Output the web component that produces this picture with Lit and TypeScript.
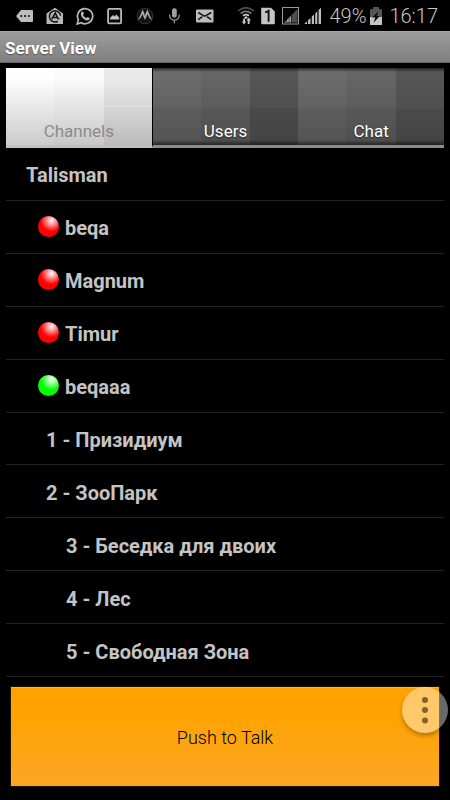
import { LitElement, html, css, svg } from "lit";
import { customElement, state } from "lit/decorators.js";
import { classMap } from "lit/directives/class-map.js";

type Row = { label: string; kind: "root" | "user" | "channel" | "sub"; talking?: boolean };

const rows: Row[] = [
  { label: "Talisman", kind: "root" },
  { label: "beqa", kind: "user" },
  { label: "Magnum", kind: "user" },
  { label: "Timur", kind: "user" },
  { label: "beqaaa", kind: "user", talking: true },
  { label: "1 - Призидиум", kind: "channel" },
  { label: "2 - ЗооПарк", kind: "channel" },
  { label: "3 - Беседка для двоих", kind: "sub" },
  { label: "4 - Лес", kind: "sub" },
  { label: "5 - Свободная Зона", kind: "sub" },
];

const icon = (content: unknown) =>
  html`<svg class="icon" viewBox="0 0 18 18" aria-hidden="true">${content}</svg>`;

const notifications = [
  svg`<path fill="#bdbdbd" d="M5 3H16Q17 3 17 4V14Q17 15 16 15H5L0.5 9.8V8.6Z"/>
    <g fill="#111"><circle cx="5.2" cy="9" r="1.1"/><circle cx="9" cy="9" r="1.1"/><circle cx="12.8" cy="9" r="1.1"/></g>`,
  svg`<path fill="#b8b8b8" d="M0.5 6.5L9 0.8L17 6.5V17H0.5Z"/>
    <circle cx="9" cy="9.4" r="5.6" fill="none" stroke="#151515" stroke-width="1.5" stroke-dasharray="28 7.2" transform="rotate(60 9 9.4)"/>
    <path fill="none" stroke="#151515" stroke-width="1.5" d="M5.8 12L9.3 6L11.4 10.6Q12 12 13.4 11.8M7 10.4H11"/>`,
  svg`<path fill="none" stroke="#b8b8b8" stroke-width="1.7" d="M1.2 17L2.4 12.8A7.6 7.6 0 1 1 5.2 15.7Z"/>
    <path fill="#b8b8b8" d="M5.6 4.8Q6.8 3.9 7.3 5L8 6.8L7 8.1Q8 10.3 10.3 11.1L11.5 9.9L13.7 11Q13.9 13.3 11.3 13.5Q8.7 13.4 6.4 10.7Q3.7 7.6 5.6 4.8Z"/>`,
  svg`<rect x="2.1" y="1.9" width="13" height="14.4" rx="1" fill="#060606" stroke="#b8b8b8" stroke-width="1.8"/>
    <path fill="#c4c4c4" d="M4.2 12.5V10.8L7 8L8.6 9.6L10.4 7.5L13.2 10.7V12.5Z"/>`,
  svg`<circle cx="9" cy="9" r="7.8" fill="#111" stroke="#333" stroke-width="1"/>
    <path fill="#a8a8a8" d="M1.8 13.4Q4.6 8 6.5 2.5Q8.2 5.3 9 9Q9.8 5.3 11.5 2.5Q13.4 8 16.2 13.4Q13 11.5 11.4 7.2Q10.4 10.3 9 13Q7.6 10.3 6.6 7.2Q5 11.5 1.8 13.4Z"/>`,
  svg`<rect x="6" y="1.2" width="4.8" height="9.5" rx="2.4" fill="#a0a0a0"/>
    <path fill="none" stroke="#8c8c8c" stroke-width="1.3" d="M3.6 7.5V8.4A4.8 4.8 0 0 0 13.2 8.4V7.5M8.4 13.2V16.5"/>`,
  svg`<rect x="0" y="2.5" width="17.5" height="13" rx="1" fill="#bdbdbd"/>
    <path fill="none" stroke="#151515" stroke-width="1.5" d="M2.2 5.5L6.6 8.2Q8.7 9.8 10.8 8.2L15.2 5.5M2.2 12.7L6.4 9.6M15.2 12.7L11 9.6"/>`,
];

const radios = [
  svg`<g fill="none" stroke-width="1.7"><path stroke="#4c4c4c" d="M1.2 3.8Q9 -2.2 16.8 3.8"/><path stroke="#777" d="M3.6 6.5Q9 2.3 14.4 6.5"/><path stroke="#c8c8c8" d="M6 8.7Q9 6.6 12 8.7"/></g>
    <path fill="#c8c8c8" d="M9 9L11 10.8L9 12L7 10.8ZM6.2 11.5H8V14.5H9.2L7.1 17.5L4.8 14.5H6.2ZM10.7 17V13.5H9.5L11.7 10.5L14 13.5H12.6V17Z"/>`,
  svg`<path fill="#c4c4c4" d="M2.2 0.8H12L15.8 4.6V16Q15.8 17.2 14.6 17.2H3.4Q2.2 17.2 2.2 16Z"/>
    <path fill="none" stroke="#111" stroke-width="1.9" d="M6.2 5.5L9.6 3.8V14.8"/>`,
  svg`<rect x="1.5" y="0.5" width="16" height="16.5" fill="#050505" stroke="#999" stroke-width="1"/>
    <path fill="#505050" d="M10.5 15.5V8.3L16.5 2V15.5Z"/>
    <path fill="#c4c4c4" d="M3.3 15.5L5.5 13.5V15.5ZM6.2 15.5V12.4L7.7 11V15.5ZM8.4 15.5V10.2L9.8 9V15.5Z"/>`,
  svg`<path fill="#bdbdbd" d="M1.2 17L4 14.3V17ZM5 17V13.3L7.5 11V17ZM8.8 17V9.6L11 7.6V17ZM12.2 17V6.4L14.3 4.4V17ZM15.6 17V3L18 0.8V17Z"/>`,
];

@customElement("app-root")
export class AppRoot extends LitElement {
  @state() private selected = "Channels";

  static styles = css`
    :host {
      display: flex;
      flex-direction: column;
      min-height: 100vh;
      background: #000;
      font-family: Roboto, "Noto Sans", sans-serif;
    }
    button {
      border: 0;
      padding: 0;
      margin: 0;
      font: inherit;
      cursor: pointer;
    }
    .status {
      display: flex;
      justify-content: space-between;
      align-items: center;
      height: 31px;
      padding: 0 12px 0 16px;
      color: #c8c8c8;
    }
    .notes,
    .system,
    .radios {
      display: flex;
      align-items: center;
    }
    .notes {
      gap: 12px;
    }
    .radios {
      gap: 4px;
    }
    .system {
      font-size: 20px;
      line-height: 31px;
      font-weight: 350;
    }
    .icon {
      display: block;
      width: 18px;
      height: 18px;
    }
    .percent {
      margin-left: 8px;
      padding-top: 2px;
    }
    .clock {
      margin-left: 7px;
      padding-top: 2px;
    }
    .battery {
      display: block;
      width: 12px;
      height: 18px;
      margin-left: 4px;
    }
    .title {
      margin: 0;
      box-sizing: border-box;
      height: 32px;
      padding: 1px 5px 0;
      border-top: 1px solid #aaa;
      border-bottom: 1px solid #6a6a6a;
      background: linear-gradient(#9c9c9c, #7f7f7f);
      color: #fff;
      font-size: 17px;
      line-height: 30px;
      font-weight: 700;
      text-shadow: 0 1px 1px #555;
    }
    .tabs {
      display: flex;
      height: 80px;
      margin: 5px 6px 0;
    }
    .tab {
      flex: 1;
      display: flex;
      align-items: flex-end;
      justify-content: center;
      box-sizing: border-box;
      padding-bottom: 3px;
      border-bottom: 3px solid #8c8c8c;
      color: #fff;
      font-size: 17px;
      line-height: 22px;
      text-shadow: 0 1px 2px #0008;
      background:
        linear-gradient(90deg, #0000 67%, #ffffff0c 67%) 0 39px / 100% 1px no-repeat,
        linear-gradient(#0000 39px, #0000000c 39px),
        linear-gradient(#0009, #0000 4px, #0000 72px, #0008),
        linear-gradient(90deg, #0000 33%, #0000000f 33% 67%, #0003 67%),
        linear-gradient(#6e6e6e, #575757);
    }
    .tab.on {
      color: #8a8a8a;
      text-shadow: none;
      border-right: 1px solid #000;
      border-bottom-color: #c0c0c0;
      background:
        linear-gradient(90deg, #0000 67%, #fff4 67%) 0 38px / 100% 1px no-repeat,
        linear-gradient(90deg, #0000 33%, #00000004 33% 67%, #00000014 67%),
        linear-gradient(#fff, #fdfdfd 12px, #cbcbcb);
    }
    .list {
      flex: 1;
      display: flex;
      flex-direction: column;
      list-style: none;
      margin: 0 6px;
      padding: 0;
    }
    .row {
      flex: 1;
      display: flex;
      align-items: center;
      min-height: 40px;
      box-sizing: border-box;
      border-bottom: 1px solid #222;
      color: #c4c4c4;
      font-size: 20px;
      line-height: 24px;
      font-weight: 700;
    }
    .label {
      padding-top: 3px;
    }
    .root {
      padding-left: 20px;
    }
    .user {
      padding-left: 32px;
      gap: 6px;
    }
    .channel {
      padding-left: 40px;
    }
    .sub {
      padding-left: 60px;
    }
    .ball {
      width: 21px;
      height: 21px;
      border-radius: 50%;
      background: radial-gradient(circle at 64% 22%, #fff, #ff8c8c 22%, #f00 50%, #f00 80%, #c00);
    }
    .ball.talking {
      background: radial-gradient(circle at 64% 22%, #fff, #8cff8c 22%, #0f0 50%, #0f0 80%, #0c0);
    }
    .footer {
      position: relative;
      padding: 10px 11px 14px;
    }
    .talk {
      display: block;
      width: 100%;
      height: 99px;
      padding-top: 2px;
      background: linear-gradient(#ffa200, #ffa303 30%, #fca626);
      box-shadow: inset 0 1px #ffb636, 0 0 1px #b87400;
      color: #000;
      font-size: 18px;
      line-height: 22px;
      font-weight: 350;
    }
    .more {
      position: absolute;
      top: 10px;
      right: 2px;
      width: 46px;
      height: 46px;
      border-radius: 50%;
      background: #ffffff69;
      box-shadow: 0 3px 4px #0004;
    }
    .dots {
      display: block;
      width: 46px;
      height: 46px;
    }
  `;

  render() {
    return html`
      <header class="status">
        <div class="notes">${notifications.map(icon)}</div>
        <div class="system">
          <div class="radios">${radios.map(icon)}</div>
          <span class="percent">49%</span>
          <svg class="battery" viewBox="0 0 12 18" aria-hidden="true">
            <path fill="#555" d="M0 2.2H3V0H9V2.2H12V10H0Z" />
            <path fill="#c4c4c4" d="M0 10H12V18H0Z" />
            <path fill="#0b0b0b" d="M8.2 4.2L2.2 10.6H5.3L3.6 15.8L9.8 9H6.7Z" />
          </svg>
          <span class="clock">16:17</span>
        </div>
      </header>
      <h1 class="title">Server View</h1>
      <div class="tabs" role="tablist">
        ${["Channels", "Users", "Chat"].map(
          (name) => html`<button
            role="tab"
            aria-selected=${this.selected === name ? "true" : "false"}
            class=${classMap({ tab: true, on: this.selected === name })}
            @click=${() => (this.selected = name)}
          >${name}</button>`
        )}
      </div>
      <ul class="list">
        ${rows.map(
          (row) => html`<li class="row ${row.kind}">
            ${row.kind === "user"
              ? html`<span class=${classMap({ ball: true, talking: !!row.talking })}></span>`
              : ""}
            <span class="label">${row.label}</span>
          </li>`
        )}
      </ul>
      <footer class="footer">
        <button class="talk">Push to Talk</button>
        <button class="more" aria-label="More options">
          <svg class="dots" viewBox="0 0 46 46" aria-hidden="true">
            <g fill="#84622c">
              <circle cx="23" cy="13" r="3" /><circle cx="23" cy="23" r="3" /><circle cx="23" cy="33.4" r="3" />
            </g>
          </svg>
        </button>
      </footer>
    `;
  }
}
